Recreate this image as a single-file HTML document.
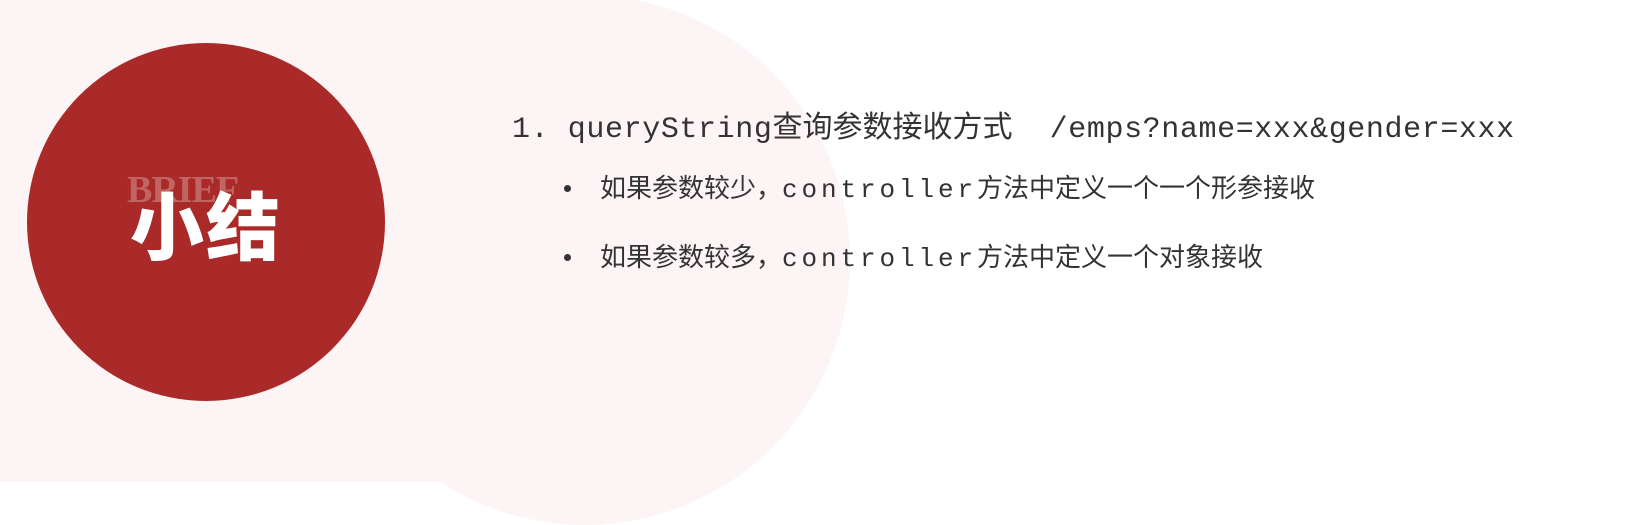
<!DOCTYPE html>
<html><head><meta charset="utf-8"><style>
html,body{margin:0;padding:0;}
body{width:1649px;height:482px;position:relative;overflow:hidden;background:#fff;font-family:"Liberation Sans","Noto Sans CJK SC",sans-serif;}
.bg1{position:absolute;left:0;top:0;width:585px;height:482px;background:#fdf5f5;}
.bg2{position:absolute;left:320px;top:-5px;width:530px;height:530px;border-radius:50%;background:#fdf5f5;}
.red{position:absolute;left:27px;top:43px;width:358px;height:358px;border-radius:50%;background:#a92a28;}
.brief{position:absolute;left:127px;top:170px;width:160px;font-family:"Liberation Serif",serif;font-weight:bold;font-size:38px;letter-spacing:-1px;color:rgba(255,255,255,0.28);line-height:40px;}
.title{position:absolute;left:130px;top:186px;font-family:"Noto Sans CJK SC",sans-serif;font-weight:900;font-size:74px;line-height:74px;color:#fff;letter-spacing:2px;}
.t{position:absolute;white-space:pre;color:#333;font-family:"Noto Sans CJK SC",sans-serif;}
.m{font-family:"Liberation Mono",monospace;}
.l1{left:512px;top:104px;font-size:30px;line-height:40px;}
.l1 .m{letter-spacing:0.6px;}
.b{font-size:26px;line-height:34px;}
.b .m{font-size:26px;letter-spacing:3.9px;}
.dot{position:absolute;width:7px;height:7px;border-radius:50%;background:#333;}
</style></head><body>
<div class="bg1"></div><div class="bg2"></div>
<div class="red"></div>
<div class="brief">BRIEF</div>
<div class="title">小结</div>
<div class="t l1"><span class="m">1. queryString</span>查询参数接收方式<span class="m">  /emps?name=xxx&amp;gender=xxx</span></div>
<div class="dot" style="left:564px;top:185px"></div>
<div class="t b" style="left:600px;top:170px">如果参数较少，<span class="m">controller</span>方法中定义一个一个形参接收</div>
<div class="dot" style="left:564px;top:254px"></div>
<div class="t b" style="left:600px;top:239px">如果参数较多，<span class="m">controller</span>方法中定义一个对象接收</div>
</body></html>
